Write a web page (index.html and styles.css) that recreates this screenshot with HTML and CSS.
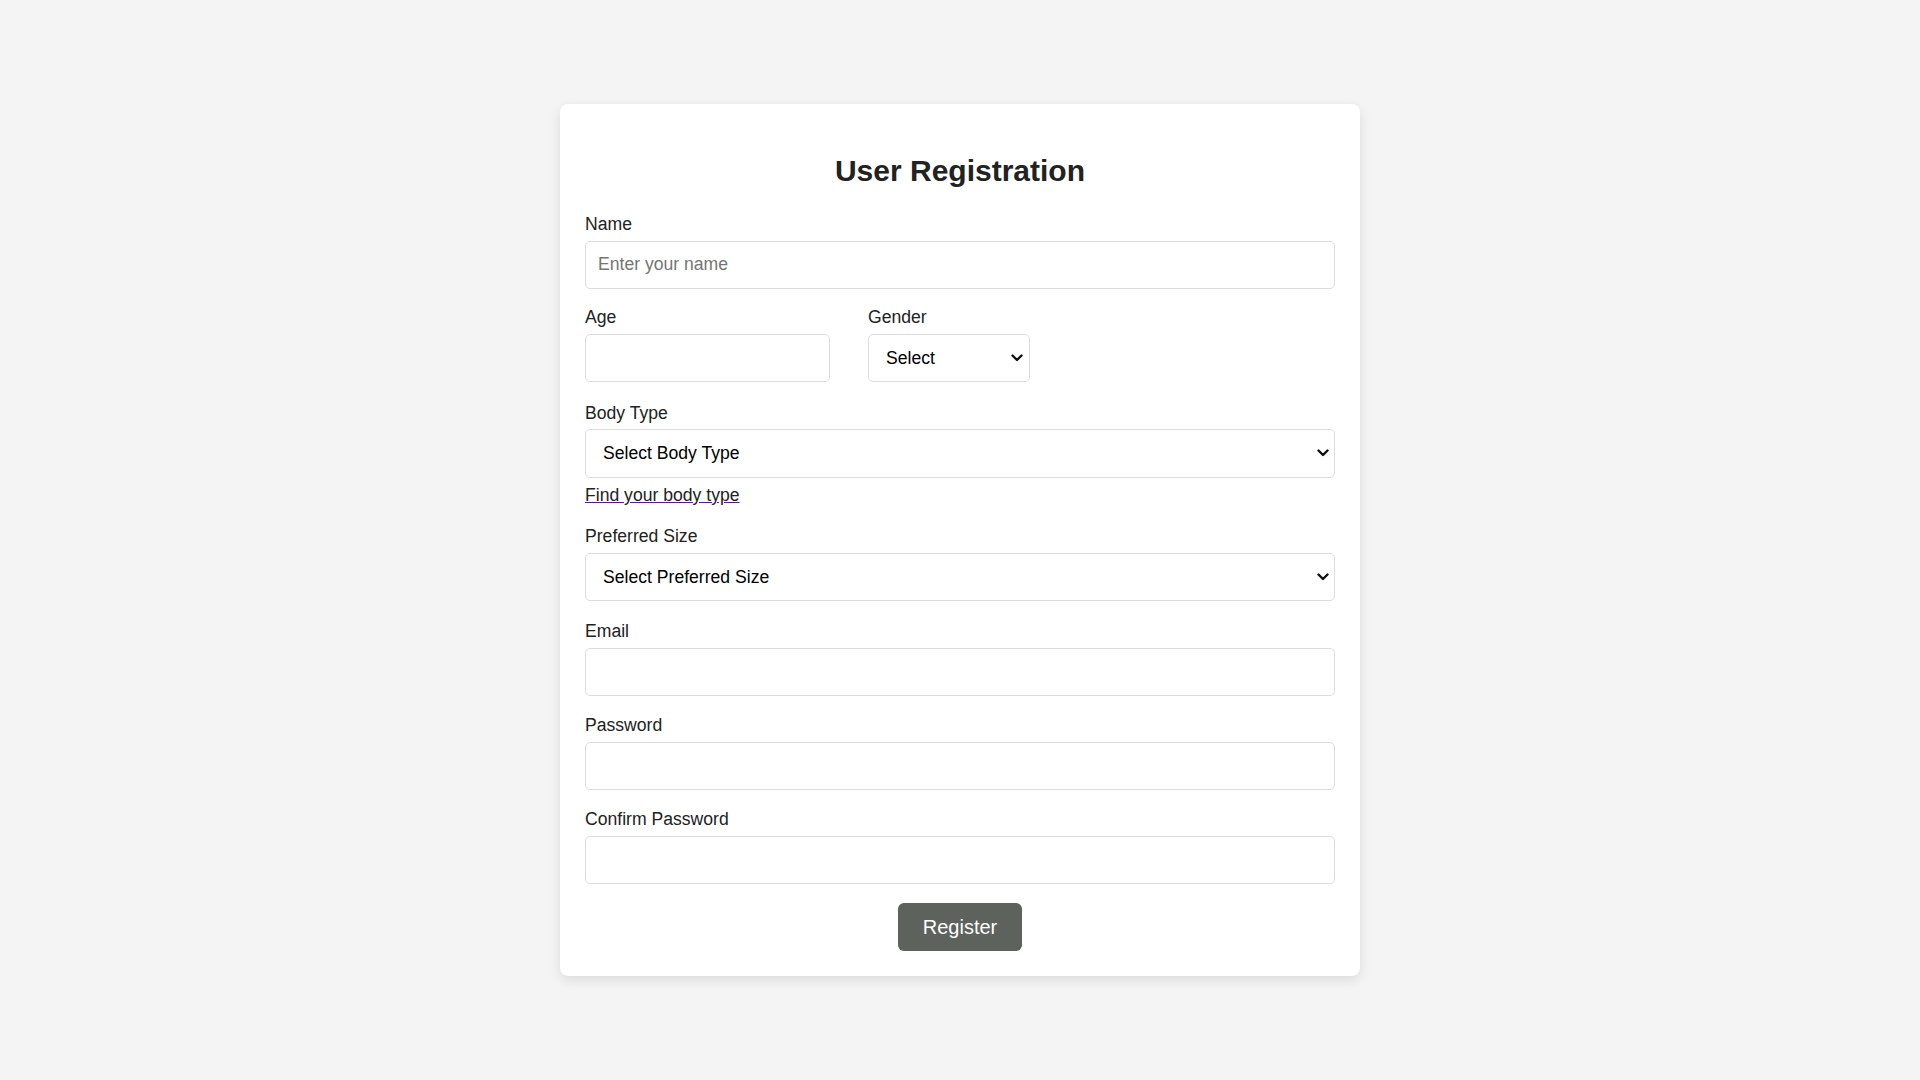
FILE: index.html
```html
<!DOCTYPE html>
<html lang="en">
<head>
<meta charset="UTF-8">
<title>User Registration</title>
<link rel="stylesheet" href="styles.css">
</head>
<body>
<div class="card">
  <h2 class="title">User Registration</h2>
  <form class="form">
    <div class="group group-first">
      <label class="label" for="name">Name</label>
      <input class="field" id="name" type="text" placeholder="Enter your name">
    </div>
    <div class="row group group-row">
      <div class="col-age">
        <label class="label" for="age">Age</label>
        <input class="field" id="age" type="number">
      </div>
      <div class="col-gender">
        <label class="label" for="gender">Gender</label>
        <select class="select select-gender" id="gender">
          <option>Select</option>
          <option>Male</option>
          <option>Female</option>
          <option>Other</option>
        </select>
      </div>
    </div>
    <div class="group group-link">
      <label class="label" for="body">Body Type</label>
      <select class="select" id="body">
        <option>Select Body Type</option>
        <option>Slim</option>
        <option>Athletic</option>
        <option>Average</option>
        <option>Curvy</option>
      </select>
      <div class="link-wrap"><a class="link" href="#">Find your body type</a></div>
    </div>
    <div class="group group-size">
      <label class="label" for="size">Preferred Size</label>
      <select class="select" id="size">
        <option>Select Preferred Size</option>
        <option>S</option>
        <option>M</option>
        <option>L</option>
        <option>XL</option>
      </select>
    </div>
    <div class="group">
      <label class="label" for="email">Email</label>
      <input class="field" id="email" type="email">
    </div>
    <div class="group">
      <label class="label" for="pw">Password</label>
      <input class="field" id="pw" type="password">
    </div>
    <div class="group last">
      <label class="label" for="pw2">Confirm Password</label>
      <input class="field" id="pw2" type="password">
    </div>
    <div class="actions">
      <button class="btn" type="button">Register</button>
    </div>
  </form>
</div>
</body>
</html>
```
FILE: styles.css
```css
* { box-sizing: border-box; }
html, body { margin: 0; padding: 0; }
body {
  background: #f4f4f4;
  font-family: "Liberation Sans", Arial, sans-serif;
  font-size: 17.6px;
  color: #222;
  min-height: 100vh;
  display: flex;
  align-items: center;
  justify-content: center;
}
.card {
  width: 800px;
  background: #fff;
  border-radius: 8px;
  padding: 25px;
  box-shadow: 0 4px 12px rgba(0, 0, 0, 0.1);
}
.title {
  font-size: 30px;
  font-weight: bold;
  text-align: center;
  margin: 25px 0 26px;
  line-height: normal;
  color: #222;
}
.form { display: flex; flex-direction: column; }
.group { margin-bottom: 19.5px; }
.group.group-first { margin-bottom: 18.5px; }
.group.group-row { margin-bottom: 20.5px; }
.group.group-link { margin-bottom: 20px; }
.group.group-size { margin-bottom: 20px; }
.group.last { margin-bottom: 19.5px; }
.label {
  display: block;
  margin-bottom: 5.5px;
  font-size: 17.6px;
  line-height: normal;
  color: #222;
}
.field {
  display: block;
  width: 100%;
  height: 48px;
  padding: 0 12px;
  border: 1px solid #ddd;
  border-radius: 5px;
  font-family: "Liberation Sans", Arial, sans-serif;
  font-size: 17.6px;
  color: #222;
  background: #fff;
  outline: none;
}
.field::placeholder { color: #757575; }
.select {
  display: block;
  width: 100%;
  height: 48.5px;
  padding: 0 30px 0 17px;
  border: 1px solid #ddd;
  border-radius: 5px;
  font-family: "Liberation Sans", Arial, sans-serif;
  font-size: 17.6px;
  color: #000;
  -webkit-appearance: none;
  appearance: none;
  background-color: #fff;
  background-image: url("data:image/svg+xml,%3Csvg xmlns='http://www.w3.org/2000/svg' width='12' height='8' viewBox='0 0 12 8'%3E%3Cpath d='M1.5 1.5 L6 6 L10.5 1.5' fill='none' stroke='%23111' stroke-width='2.4' stroke-linecap='round' stroke-linejoin='round'/%3E%3C/svg%3E");
  background-repeat: no-repeat;
  background-position: right 5px center;
  background-size: 12px 8px;
}
.row { display: flex; gap: 38px; }
.col-age { width: 245px; }
.col-gender { width: 162px; }
.select-gender { width: 162px; background-position: right 6px center; }
.link-wrap { margin-top: 7.5px; line-height: normal; }
.link {
  color: #222;
  text-decoration: underline;
  text-decoration-color: #551a8b;
  font-size: 17.6px;
}
.actions { display: flex; justify-content: center; }
.btn {
  height: 48px;
  padding: 0 25px;
  background: #5e625c;
  color: #fff;
  border: none;
  border-radius: 6px;
  font-family: "Liberation Sans", Arial, sans-serif;
  font-size: 20px;
  cursor: pointer;
}
```
